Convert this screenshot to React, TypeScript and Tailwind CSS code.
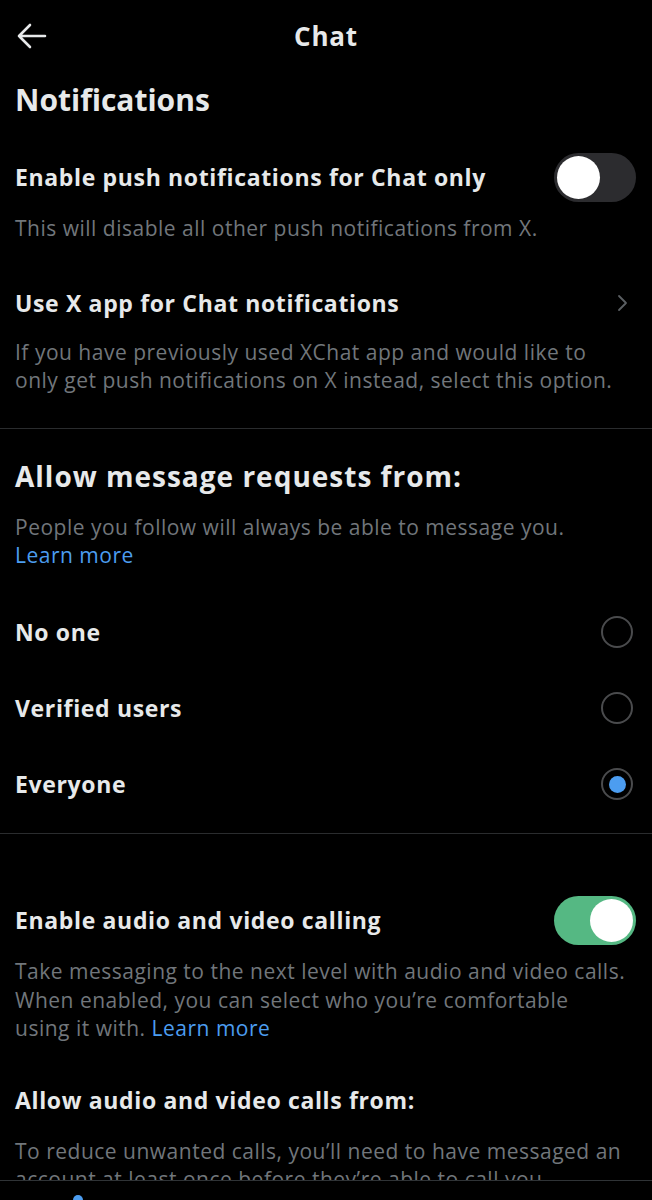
import React from "react";

const font = { fontFamily: "'Open Sans', 'Noto Sans', sans-serif" };

function Toggle({ on }: { on: boolean }) {
  return (
    <div
      className={
        "relative h-[49px] w-[82px] shrink-0 rounded-full " +
        (on ? "bg-[#55b883]" : "bg-[#2c2c2f]")
      }
    >
      <div
        className={
          "absolute top-[3px] h-[43px] w-[43px] rounded-full bg-white " +
          (on ? "right-[3px]" : "left-[3px]")
        }
      />
    </div>
  );
}

function Radio({ checked }: { checked?: boolean }) {
  return (
    <div className="mr-[4px] flex h-[32px] w-[32px] items-center justify-center rounded-full border-[2.5px] border-[#4a4b4d]">
      {checked && <div className="h-[17px] w-[17px] rounded-full bg-[#4c9df0]" />}
    </div>
  );
}

const title = "text-[23px] font-bold tracking-[0.65px]";
const body = "text-[21px] tracking-[0.5px] text-[#71767b]";

export default function App() {
  return (
    <div className="h-[1200px] w-[652px] overflow-hidden bg-black text-[#e7e9ea]" style={font}>
      <div className="h-[1180px] overflow-hidden">
        {/* Header */}
        <div className="relative flex h-[72px] items-center justify-center">
          <svg
            className="absolute left-0 top-0"
            width="60"
            height="72"
            viewBox="0 0 60 72"
            fill="none"
            stroke="#e7e9ea"
            strokeWidth="2.6"
            strokeLinecap="round"
            strokeLinejoin="round"
          >
            <path d="M45 36 H19 M30 25 L19 36 L30 47" />
          </svg>
          <span className="text-[26px] font-bold leading-none tracking-[0.8px]">Chat</span>
        </div>

        <div className="px-[15px]">
          <div className="h-[56px] text-[30px] font-bold leading-[56px]">Notifications</div>

          <div className="mt-[20px] flex h-[58px] items-center justify-between">
            <span className={title}>Enable push notifications for Chat only</span>
            <div className="mr-[1px]">
              <Toggle on={false} />
            </div>
          </div>
          <p className={"mt-[8px] leading-[28px] " + body}>
            This will disable all other push notifications from X.
          </p>

          <div className="mt-[45px] flex h-[32px] items-center justify-between">
            <span className={"leading-[32px] " + title}>Use X app for Chat notifications</span>
            <svg width="12" height="20" viewBox="0 0 12 20" fill="none" stroke="#5b5f63" strokeWidth="1.8" strokeLinecap="round" strokeLinejoin="round" className="mr-[9px]">
              <path d="M3 3 L10 10 L3 17" />
            </svg>
          </div>
          <p className={"mt-[19px] leading-[28px] " + body}>
            If you have previously used XChat app and would like to
            <br />
            only get push notifications on X instead, select this option.
          </p>
        </div>

        <div className="mt-[34px] h-px bg-[#2a2c2e]" />

        <div className="px-[15px]">
          <div className="mt-[29px] text-[28px] font-bold leading-[36px] tracking-[1px]">Allow message requests from:</div>
          <p className={"mt-[19px] leading-[28px] " + body}>
            People you follow will always be able to message you.
            <br />
            <span className="text-[#4c9df0]">Learn more</span>
          </p>

          <div className="mt-[25px]">
            {[
              ["No one", false],
              ["Verified users", false],
              ["Everyone", true],
            ].map(([label, checked]) => (
              <div key={label as string} className="flex h-[76px] items-center justify-between">
                <span className={title}>{label as string}</span>
                <Radio checked={checked as boolean} />
              </div>
            ))}
          </div>
        </div>

        <div className="mt-[11px] h-px bg-[#2a2c2e]" />

        <div className="px-[15px]">
          <div className="mt-[57px] flex h-[58px] items-center justify-between">
            <span className={title}>Enable audio and video calling</span>
            <div className="mr-[1px]">
              <Toggle on={true} />
            </div>
          </div>
          <p className={"mt-[8px] leading-[28.5px] " + body}>
            Take messaging to the next level with audio and video calls.
            <br />
            When enabled, you can select who you’re comfortable
            <br />
            using it with. <span className="text-[#4c9df0]">Learn more</span>
          </p>

          <div className={"mt-[41px] leading-[32px] " + title}>Allow audio and video calls from:</div>
          <p className={"mt-[21px] leading-[28px] " + body}>
            To reduce unwanted calls, you’ll need to have messaged an
            <br />
            account at least once before they’re able to call you.
          </p>
        </div>
      </div>

      {/* Bottom tab bar */}
      <div className="relative h-[20px] border-t border-[#2f3336] bg-black">
        <div className="absolute left-[73px] top-[14px] h-[10px] w-[10px] rounded-full bg-[#4c9df0]" />
      </div>
    </div>
  );
}
